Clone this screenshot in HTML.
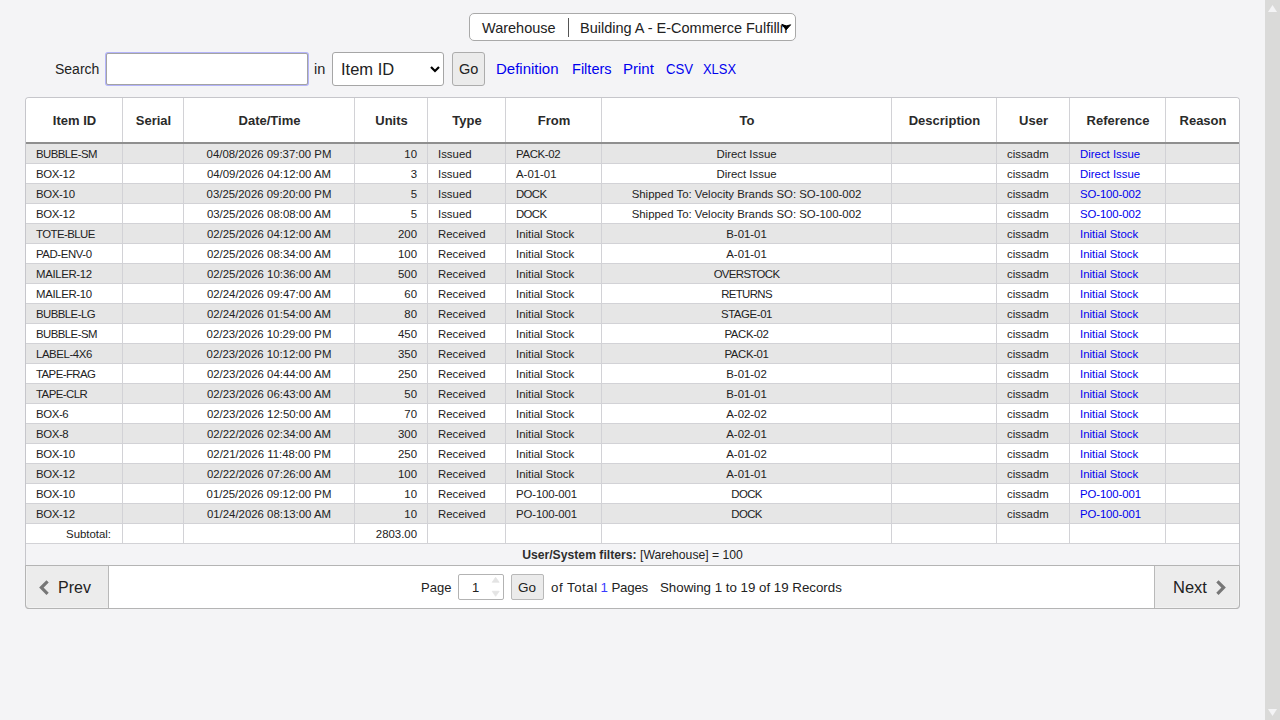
<!DOCTYPE html><html><head><meta charset="utf-8"><style>
*{margin:0;padding:0;box-sizing:border-box}
html,body{width:1280px;height:720px;overflow:hidden;background:#f4f4f6;font-family:"Liberation Sans",sans-serif;color:#222}
.a{position:absolute;white-space:nowrap}
.sb{position:absolute;left:1265px;top:0;width:15px;height:720px;background:#dadad9}
.wh{position:absolute;left:469px;top:13px;width:327px;height:28px;background:#fff;border:1px solid #a9a9a9;border-radius:5px}
.inp{position:absolute;left:106px;top:53px;width:202px;height:32px;background:#fff;border:1px solid #a3a3a3;border-radius:2px;box-shadow:0 0 0 1px #b4b4fa}
.sel{position:absolute;left:332px;top:52px;width:112px;height:34px;background:#fff;border:1px solid #a6a6a6;border-radius:3px}
.go{position:absolute;background:#ebebeb;border:1px solid #acacac;border-radius:3px}

.tbl{position:absolute;left:25px;top:97px;width:1215px;height:512px;border:1px solid #c6c6cb;border-bottom-color:#b4b4b4;border-radius:4px;background:#f4f4f6;overflow:hidden}
.hd{position:absolute;left:0;top:0;width:1213px;height:46px;background:#fff;border-bottom:2px solid #8f8f8f}
.row{position:absolute;left:0;width:1213px;height:20px;border-bottom:1px solid #d2d2d6}
.g{background:#e6e6e6}.w{background:#fff}
.vl{position:absolute;width:1px;background:#d2d2d6}
.th{position:absolute;top:0;height:44px;line-height:46px;text-align:center;font-weight:bold;font-size:13px;color:#2a2a2a}
.td{position:absolute;top:0;height:19px;line-height:21px;font-size:11.4px;color:#222;white-space:nowrap}
.lk{color:#0000ee}
</style></head><body>
<div class="sb"><svg width="15" height="720" style="position:absolute;left:0;top:0"><path d="M3 12 L7.5 5 L12 12 Z" fill="#f4f4f6"/><path d="M3 709 L7.5 716 L12 709 Z" fill="#f4f4f6"/></svg></div>
<div class="wh"></div>
<div class="a" style="left:482px;top:20px;font-size:14.5px;line-height:17px">Warehouse</div>
<div class="a" style="left:568px;top:18px;width:1px;height:19px;background:#555"></div>
<div class="a" style="left:580px;top:20px;width:207px;overflow:hidden;font-size:14.5px;line-height:17px">Building A - E-Commerce Fulfillment</div>
<svg class="a" style="left:781px;top:23px" width="11" height="8"><path d="M0.8 1.3 L5.2 3 L9.6 1.8 L5.2 6.8 Z" fill="#000" stroke="#000" stroke-width="1" stroke-linejoin="round"/></svg>
<div class="a" style="left:55px;top:61px;font-size:14px;line-height:16px">Search</div>
<div class="inp"></div>
<div class="a" style="left:314px;top:61px;font-size:14.5px;line-height:16px">in</div>
<div class="sel"></div>
<div class="a" style="left:341px;top:60px;font-size:16.5px;line-height:18px">Item ID</div>
<svg class="a" style="left:430px;top:65px" width="10" height="8"><path d="M1 2 L5 6 L9 2" stroke="#000" stroke-width="2.2" fill="none"/></svg>
<div class="go" style="left:452px;top:52px;width:33px;height:34px"></div>
<div class="a" style="left:459px;top:61px;font-size:14.5px;line-height:16px">Go</div>
<div class="a lk" style="left:496px;top:61px;font-size:15px;line-height:16px;transform:scaleX(1.0);transform-origin:0 0">Definition</div>
<div class="a lk" style="left:572px;top:61px;font-size:15px;line-height:16px;transform:scaleX(0.97);transform-origin:0 0">Filters</div>
<div class="a lk" style="left:623px;top:61px;font-size:15px;line-height:16px;transform:scaleX(1.0);transform-origin:0 0">Print</div>
<div class="a lk" style="left:666px;top:61px;font-size:15px;line-height:16px;transform:scaleX(0.88);transform-origin:0 0">CSV</div>
<div class="a lk" style="left:703px;top:61px;font-size:15px;line-height:16px;transform:scaleX(0.86);transform-origin:0 0">XLSX</div>
<div class="tbl">
<div class="hd"></div>
<div class="row g" style="top:46px"></div>
<div class="row w" style="top:66px"></div>
<div class="row g" style="top:86px"></div>
<div class="row w" style="top:106px"></div>
<div class="row g" style="top:126px"></div>
<div class="row w" style="top:146px"></div>
<div class="row g" style="top:166px"></div>
<div class="row w" style="top:186px"></div>
<div class="row g" style="top:206px"></div>
<div class="row w" style="top:226px"></div>
<div class="row g" style="top:246px"></div>
<div class="row w" style="top:266px"></div>
<div class="row g" style="top:286px"></div>
<div class="row w" style="top:306px"></div>
<div class="row g" style="top:326px"></div>
<div class="row w" style="top:346px"></div>
<div class="row g" style="top:366px"></div>
<div class="row w" style="top:386px"></div>
<div class="row g" style="top:406px"></div>
<div class="row w" style="top:426px"></div>
<div class="a" style="left:0;top:467px;width:1213px;height:1px;background:#b8b8b8"></div>
<div class="a" style="left:0;top:468px;width:1213px;height:42px;background:#fff"></div>
<div class="vl" style="left:96px;top:0;height:44px"></div>
<div class="vl" style="left:96px;top:46px;height:400px"></div>
<div class="vl" style="left:157px;top:0;height:44px"></div>
<div class="vl" style="left:157px;top:46px;height:400px"></div>
<div class="vl" style="left:328px;top:0;height:44px"></div>
<div class="vl" style="left:328px;top:46px;height:400px"></div>
<div class="vl" style="left:401px;top:0;height:44px"></div>
<div class="vl" style="left:401px;top:46px;height:400px"></div>
<div class="vl" style="left:479px;top:0;height:44px"></div>
<div class="vl" style="left:479px;top:46px;height:400px"></div>
<div class="vl" style="left:575px;top:0;height:44px"></div>
<div class="vl" style="left:575px;top:46px;height:400px"></div>
<div class="vl" style="left:865px;top:0;height:44px"></div>
<div class="vl" style="left:865px;top:46px;height:400px"></div>
<div class="vl" style="left:970px;top:0;height:44px"></div>
<div class="vl" style="left:970px;top:46px;height:400px"></div>
<div class="vl" style="left:1043px;top:0;height:44px"></div>
<div class="vl" style="left:1043px;top:46px;height:400px"></div>
<div class="vl" style="left:1139px;top:0;height:44px"></div>
<div class="vl" style="left:1139px;top:46px;height:400px"></div>
<div class="th" style="left:0px;width:97px">Item ID</div>
<div class="th" style="left:97px;width:61px">Serial</div>
<div class="th" style="left:158px;width:171px">Date/Time</div>
<div class="th" style="left:329px;width:73px">Units</div>
<div class="th" style="left:402px;width:78px">Type</div>
<div class="th" style="left:480px;width:96px">From</div>
<div class="th" style="left:576px;width:290px">To</div>
<div class="th" style="left:866px;width:105px">Description</div>
<div class="th" style="left:971px;width:73px">User</div>
<div class="th" style="left:1044px;width:96px">Reference</div>
<div class="th" style="left:1140px;width:74px">Reason</div>
<div class="td " style="left:10px;top:46px;letter-spacing:-0.55px;">BUBBLE-SM</div>
<div class="td" style="left:158px;width:170px;text-align:center;top:46px;">04/08/2026 09:37:00 PM</div>
<div class="td" style="right:822px;top:46px">10</div>
<div class="td " style="left:412px;top:46px;">Issued</div>
<div class="td " style="left:490px;top:46px;letter-spacing:-0.35px;">PACK-02</div>
<div class="td" style="left:576px;width:289px;text-align:center;top:46px;">Direct Issue</div>
<div class="td " style="left:981px;top:46px;">cissadm</div>
<div class="td lk" style="left:1054px;top:46px;">Direct Issue</div>
<div class="td " style="left:10px;top:66px;letter-spacing:-0.31px;">BOX-12</div>
<div class="td" style="left:158px;width:170px;text-align:center;top:66px;">04/09/2026 04:12:00 AM</div>
<div class="td" style="right:822px;top:66px">3</div>
<div class="td " style="left:412px;top:66px;">Issued</div>
<div class="td " style="left:490px;top:66px;">A-01-01</div>
<div class="td" style="left:576px;width:289px;text-align:center;top:66px;">Direct Issue</div>
<div class="td " style="left:981px;top:66px;">cissadm</div>
<div class="td lk" style="left:1054px;top:66px;">Direct Issue</div>
<div class="td " style="left:10px;top:86px;letter-spacing:-0.31px;">BOX-10</div>
<div class="td" style="left:158px;width:170px;text-align:center;top:86px;">03/25/2026 09:20:00 PM</div>
<div class="td" style="right:822px;top:86px">5</div>
<div class="td " style="left:412px;top:86px;">Issued</div>
<div class="td " style="left:490px;top:86px;letter-spacing:-0.62px;">DOCK</div>
<div class="td" style="left:576px;width:289px;text-align:center;top:86px;">Shipped To: Velocity Brands SO: SO-100-002</div>
<div class="td " style="left:981px;top:86px;">cissadm</div>
<div class="td lk" style="left:1054px;top:86px;letter-spacing:-0.12px;">SO-100-002</div>
<div class="td " style="left:10px;top:106px;letter-spacing:-0.31px;">BOX-12</div>
<div class="td" style="left:158px;width:170px;text-align:center;top:106px;">03/25/2026 08:08:00 AM</div>
<div class="td" style="right:822px;top:106px">5</div>
<div class="td " style="left:412px;top:106px;">Issued</div>
<div class="td " style="left:490px;top:106px;letter-spacing:-0.62px;">DOCK</div>
<div class="td" style="left:576px;width:289px;text-align:center;top:106px;">Shipped To: Velocity Brands SO: SO-100-002</div>
<div class="td " style="left:981px;top:106px;">cissadm</div>
<div class="td lk" style="left:1054px;top:106px;letter-spacing:-0.12px;">SO-100-002</div>
<div class="td " style="left:10px;top:126px;letter-spacing:-0.55px;">TOTE-BLUE</div>
<div class="td" style="left:158px;width:170px;text-align:center;top:126px;">02/25/2026 04:12:00 AM</div>
<div class="td" style="right:822px;top:126px">200</div>
<div class="td " style="left:412px;top:126px;">Received</div>
<div class="td " style="left:490px;top:126px;">Initial Stock</div>
<div class="td" style="left:576px;width:289px;text-align:center;top:126px;">B-01-01</div>
<div class="td " style="left:981px;top:126px;">cissadm</div>
<div class="td lk" style="left:1054px;top:126px;">Initial Stock</div>
<div class="td " style="left:10px;top:146px;letter-spacing:-0.41px;">PAD-ENV-0</div>
<div class="td" style="left:158px;width:170px;text-align:center;top:146px;">02/25/2026 08:34:00 AM</div>
<div class="td" style="right:822px;top:146px">100</div>
<div class="td " style="left:412px;top:146px;">Received</div>
<div class="td " style="left:490px;top:146px;">Initial Stock</div>
<div class="td" style="left:576px;width:289px;text-align:center;top:146px;">A-01-01</div>
<div class="td " style="left:981px;top:146px;">cissadm</div>
<div class="td lk" style="left:1054px;top:146px;">Initial Stock</div>
<div class="td " style="left:10px;top:166px;letter-spacing:-0.34px;">MAILER-12</div>
<div class="td" style="left:158px;width:170px;text-align:center;top:166px;">02/25/2026 10:36:00 AM</div>
<div class="td" style="right:822px;top:166px">500</div>
<div class="td " style="left:412px;top:166px;">Received</div>
<div class="td " style="left:490px;top:166px;">Initial Stock</div>
<div class="td" style="left:576px;width:289px;text-align:center;top:166px;letter-spacing:-0.62px;">OVERSTOCK</div>
<div class="td " style="left:981px;top:166px;">cissadm</div>
<div class="td lk" style="left:1054px;top:166px;">Initial Stock</div>
<div class="td " style="left:10px;top:186px;letter-spacing:-0.34px;">MAILER-10</div>
<div class="td" style="left:158px;width:170px;text-align:center;top:186px;">02/24/2026 09:47:00 AM</div>
<div class="td" style="right:822px;top:186px">60</div>
<div class="td " style="left:412px;top:186px;">Received</div>
<div class="td " style="left:490px;top:186px;">Initial Stock</div>
<div class="td" style="left:576px;width:289px;text-align:center;top:186px;letter-spacing:-0.62px;">RETURNS</div>
<div class="td " style="left:981px;top:186px;">cissadm</div>
<div class="td lk" style="left:1054px;top:186px;">Initial Stock</div>
<div class="td " style="left:10px;top:206px;letter-spacing:-0.55px;">BUBBLE-LG</div>
<div class="td" style="left:158px;width:170px;text-align:center;top:206px;">02/24/2026 01:54:00 AM</div>
<div class="td" style="right:822px;top:206px">80</div>
<div class="td " style="left:412px;top:206px;">Received</div>
<div class="td " style="left:490px;top:206px;">Initial Stock</div>
<div class="td" style="left:576px;width:289px;text-align:center;top:206px;letter-spacing:-0.39px;">STAGE-01</div>
<div class="td " style="left:981px;top:206px;">cissadm</div>
<div class="td lk" style="left:1054px;top:206px;">Initial Stock</div>
<div class="td " style="left:10px;top:226px;letter-spacing:-0.55px;">BUBBLE-SM</div>
<div class="td" style="left:158px;width:170px;text-align:center;top:226px;">02/23/2026 10:29:00 PM</div>
<div class="td" style="right:822px;top:226px">450</div>
<div class="td " style="left:412px;top:226px;">Received</div>
<div class="td " style="left:490px;top:226px;">Initial Stock</div>
<div class="td" style="left:576px;width:289px;text-align:center;top:226px;letter-spacing:-0.35px;">PACK-02</div>
<div class="td " style="left:981px;top:226px;">cissadm</div>
<div class="td lk" style="left:1054px;top:226px;">Initial Stock</div>
<div class="td " style="left:10px;top:246px;letter-spacing:-0.41px;">LABEL-4X6</div>
<div class="td" style="left:158px;width:170px;text-align:center;top:246px;">02/23/2026 10:12:00 PM</div>
<div class="td" style="right:822px;top:246px">350</div>
<div class="td " style="left:412px;top:246px;">Received</div>
<div class="td " style="left:490px;top:246px;">Initial Stock</div>
<div class="td" style="left:576px;width:289px;text-align:center;top:246px;letter-spacing:-0.35px;">PACK-01</div>
<div class="td " style="left:981px;top:246px;">cissadm</div>
<div class="td lk" style="left:1054px;top:246px;">Initial Stock</div>
<div class="td " style="left:10px;top:266px;letter-spacing:-0.55px;">TAPE-FRAG</div>
<div class="td" style="left:158px;width:170px;text-align:center;top:266px;">02/23/2026 04:44:00 AM</div>
<div class="td" style="right:822px;top:266px">250</div>
<div class="td " style="left:412px;top:266px;">Received</div>
<div class="td " style="left:490px;top:266px;">Initial Stock</div>
<div class="td" style="left:576px;width:289px;text-align:center;top:266px;">B-01-02</div>
<div class="td " style="left:981px;top:266px;">cissadm</div>
<div class="td lk" style="left:1054px;top:266px;">Initial Stock</div>
<div class="td " style="left:10px;top:286px;letter-spacing:-0.54px;">TAPE-CLR</div>
<div class="td" style="left:158px;width:170px;text-align:center;top:286px;">02/23/2026 06:43:00 AM</div>
<div class="td" style="right:822px;top:286px">50</div>
<div class="td " style="left:412px;top:286px;">Received</div>
<div class="td " style="left:490px;top:286px;">Initial Stock</div>
<div class="td" style="left:576px;width:289px;text-align:center;top:286px;">B-01-01</div>
<div class="td " style="left:981px;top:286px;">cissadm</div>
<div class="td lk" style="left:1054px;top:286px;">Initial Stock</div>
<div class="td " style="left:10px;top:306px;letter-spacing:-0.37px;">BOX-6</div>
<div class="td" style="left:158px;width:170px;text-align:center;top:306px;">02/23/2026 12:50:00 AM</div>
<div class="td" style="right:822px;top:306px">70</div>
<div class="td " style="left:412px;top:306px;">Received</div>
<div class="td " style="left:490px;top:306px;">Initial Stock</div>
<div class="td" style="left:576px;width:289px;text-align:center;top:306px;">A-02-02</div>
<div class="td " style="left:981px;top:306px;">cissadm</div>
<div class="td lk" style="left:1054px;top:306px;">Initial Stock</div>
<div class="td " style="left:10px;top:326px;letter-spacing:-0.37px;">BOX-8</div>
<div class="td" style="left:158px;width:170px;text-align:center;top:326px;">02/22/2026 02:34:00 AM</div>
<div class="td" style="right:822px;top:326px">300</div>
<div class="td " style="left:412px;top:326px;">Received</div>
<div class="td " style="left:490px;top:326px;">Initial Stock</div>
<div class="td" style="left:576px;width:289px;text-align:center;top:326px;">A-02-01</div>
<div class="td " style="left:981px;top:326px;">cissadm</div>
<div class="td lk" style="left:1054px;top:326px;">Initial Stock</div>
<div class="td " style="left:10px;top:346px;letter-spacing:-0.31px;">BOX-10</div>
<div class="td" style="left:158px;width:170px;text-align:center;top:346px;">02/21/2026 11:48:00 PM</div>
<div class="td" style="right:822px;top:346px">250</div>
<div class="td " style="left:412px;top:346px;">Received</div>
<div class="td " style="left:490px;top:346px;">Initial Stock</div>
<div class="td" style="left:576px;width:289px;text-align:center;top:346px;">A-01-02</div>
<div class="td " style="left:981px;top:346px;">cissadm</div>
<div class="td lk" style="left:1054px;top:346px;">Initial Stock</div>
<div class="td " style="left:10px;top:366px;letter-spacing:-0.31px;">BOX-12</div>
<div class="td" style="left:158px;width:170px;text-align:center;top:366px;">02/22/2026 07:26:00 AM</div>
<div class="td" style="right:822px;top:366px">100</div>
<div class="td " style="left:412px;top:366px;">Received</div>
<div class="td " style="left:490px;top:366px;">Initial Stock</div>
<div class="td" style="left:576px;width:289px;text-align:center;top:366px;">A-01-01</div>
<div class="td " style="left:981px;top:366px;">cissadm</div>
<div class="td lk" style="left:1054px;top:366px;">Initial Stock</div>
<div class="td " style="left:10px;top:386px;letter-spacing:-0.31px;">BOX-10</div>
<div class="td" style="left:158px;width:170px;text-align:center;top:386px;">01/25/2026 09:12:00 PM</div>
<div class="td" style="right:822px;top:386px">10</div>
<div class="td " style="left:412px;top:386px;">Received</div>
<div class="td " style="left:490px;top:386px;letter-spacing:-0.12px;">PO-100-001</div>
<div class="td" style="left:576px;width:289px;text-align:center;top:386px;letter-spacing:-0.62px;">DOCK</div>
<div class="td " style="left:981px;top:386px;">cissadm</div>
<div class="td lk" style="left:1054px;top:386px;letter-spacing:-0.12px;">PO-100-001</div>
<div class="td " style="left:10px;top:406px;letter-spacing:-0.31px;">BOX-12</div>
<div class="td" style="left:158px;width:170px;text-align:center;top:406px;">01/24/2026 08:13:00 AM</div>
<div class="td" style="right:822px;top:406px">10</div>
<div class="td " style="left:412px;top:406px;">Received</div>
<div class="td " style="left:490px;top:406px;letter-spacing:-0.12px;">PO-100-001</div>
<div class="td" style="left:576px;width:289px;text-align:center;top:406px;letter-spacing:-0.62px;">DOCK</div>
<div class="td " style="left:981px;top:406px;">cissadm</div>
<div class="td lk" style="left:1054px;top:406px;letter-spacing:-0.12px;">PO-100-001</div>
<div class="td" style="right:1128px;top:426px">Subtotal:</div>
<div class="td" style="right:822px;top:426px">2803.00</div>
<div class="a" style="left:0;width:1213px;top:448px;line-height:18px;text-align:center;font-size:12.2px"><b style="color:#2e2e2e">User/System filters:</b> [Warehouse] = 100</div>
<div class="a" style="left:0;top:468px;width:83px;height:42px;background:#ececec;border-right:1px solid #b9b9b9;box-shadow:inset 1px -1px 0 #f2f2f2"></div>
<svg class="a" style="left:12px;top:481px" width="13" height="18"><path d="M9.6 2.4 L3.4 8.6 L9.6 14.8" stroke="#777" stroke-width="3.2" fill="none"/></svg>
<div class="a" style="left:32px;top:481px;font-size:16px;line-height:18px">Prev</div>
<div class="a" style="left:1128px;top:468px;width:85px;height:42px;background:#ececec;border-left:1px solid #b9b9b9;box-shadow:inset -1px -1px 0 #f2f2f2"></div>
<div class="a" style="left:1147px;top:480px;font-size:16.5px;line-height:18px">Next</div>
<svg class="a" style="left:1189px;top:481px" width="13" height="18"><path d="M2.4 2.4 L8.6 8.6 L2.4 14.8" stroke="#777" stroke-width="3.2" fill="none"/></svg>
<div class="a" style="left:395px;top:482px;font-size:13px;line-height:16px">Page</div>
<div class="a" style="left:432px;top:476px;width:46px;height:26px;background:#fff;border:1px solid #b3b3b3;border-radius:2px"></div>
<div class="a" style="left:446px;top:482px;font-size:13px;line-height:16px">1</div>
<svg class="a" style="left:465px;top:478px" width="10" height="22"><path d="M1.2 6.3 L4.6 1.3 L8.2 6.3 Z M1.2 15.3 L4.6 20.3 L8.2 15.3 Z" fill="#e4e4e4" stroke="#e4e4e4" stroke-width="0.8" stroke-linejoin="round"/></svg>
<div class="go" style="left:485px;top:476px;width:33px;height:26px;border-color:#b8b8b8;border-radius:2px"></div>
<div class="a" style="left:492px;top:482px;font-size:13.5px;line-height:16px">Go</div>
<div class="a" style="left:525px;top:482px;font-size:13.3px;line-height:16px;letter-spacing:0.5px">of Total</div>
<div class="a" style="left:574.5px;top:482px;font-size:13.3px;line-height:16px;color:#3a3aff">1</div>
<div class="a" style="left:585.5px;top:482px;font-size:13.3px;line-height:16px;letter-spacing:-0.25px">Pages</div>
<div class="a" style="left:634px;top:482px;font-size:13.3px;line-height:16px">Showing 1 to 19 of 19 Records</div>
</div>
<div class="a" style="left:25px;top:565px;width:1215px;height:44px;border:1px solid #b4b4b4;border-radius:0 0 4px 4px;pointer-events:none"></div>
</body></html>
